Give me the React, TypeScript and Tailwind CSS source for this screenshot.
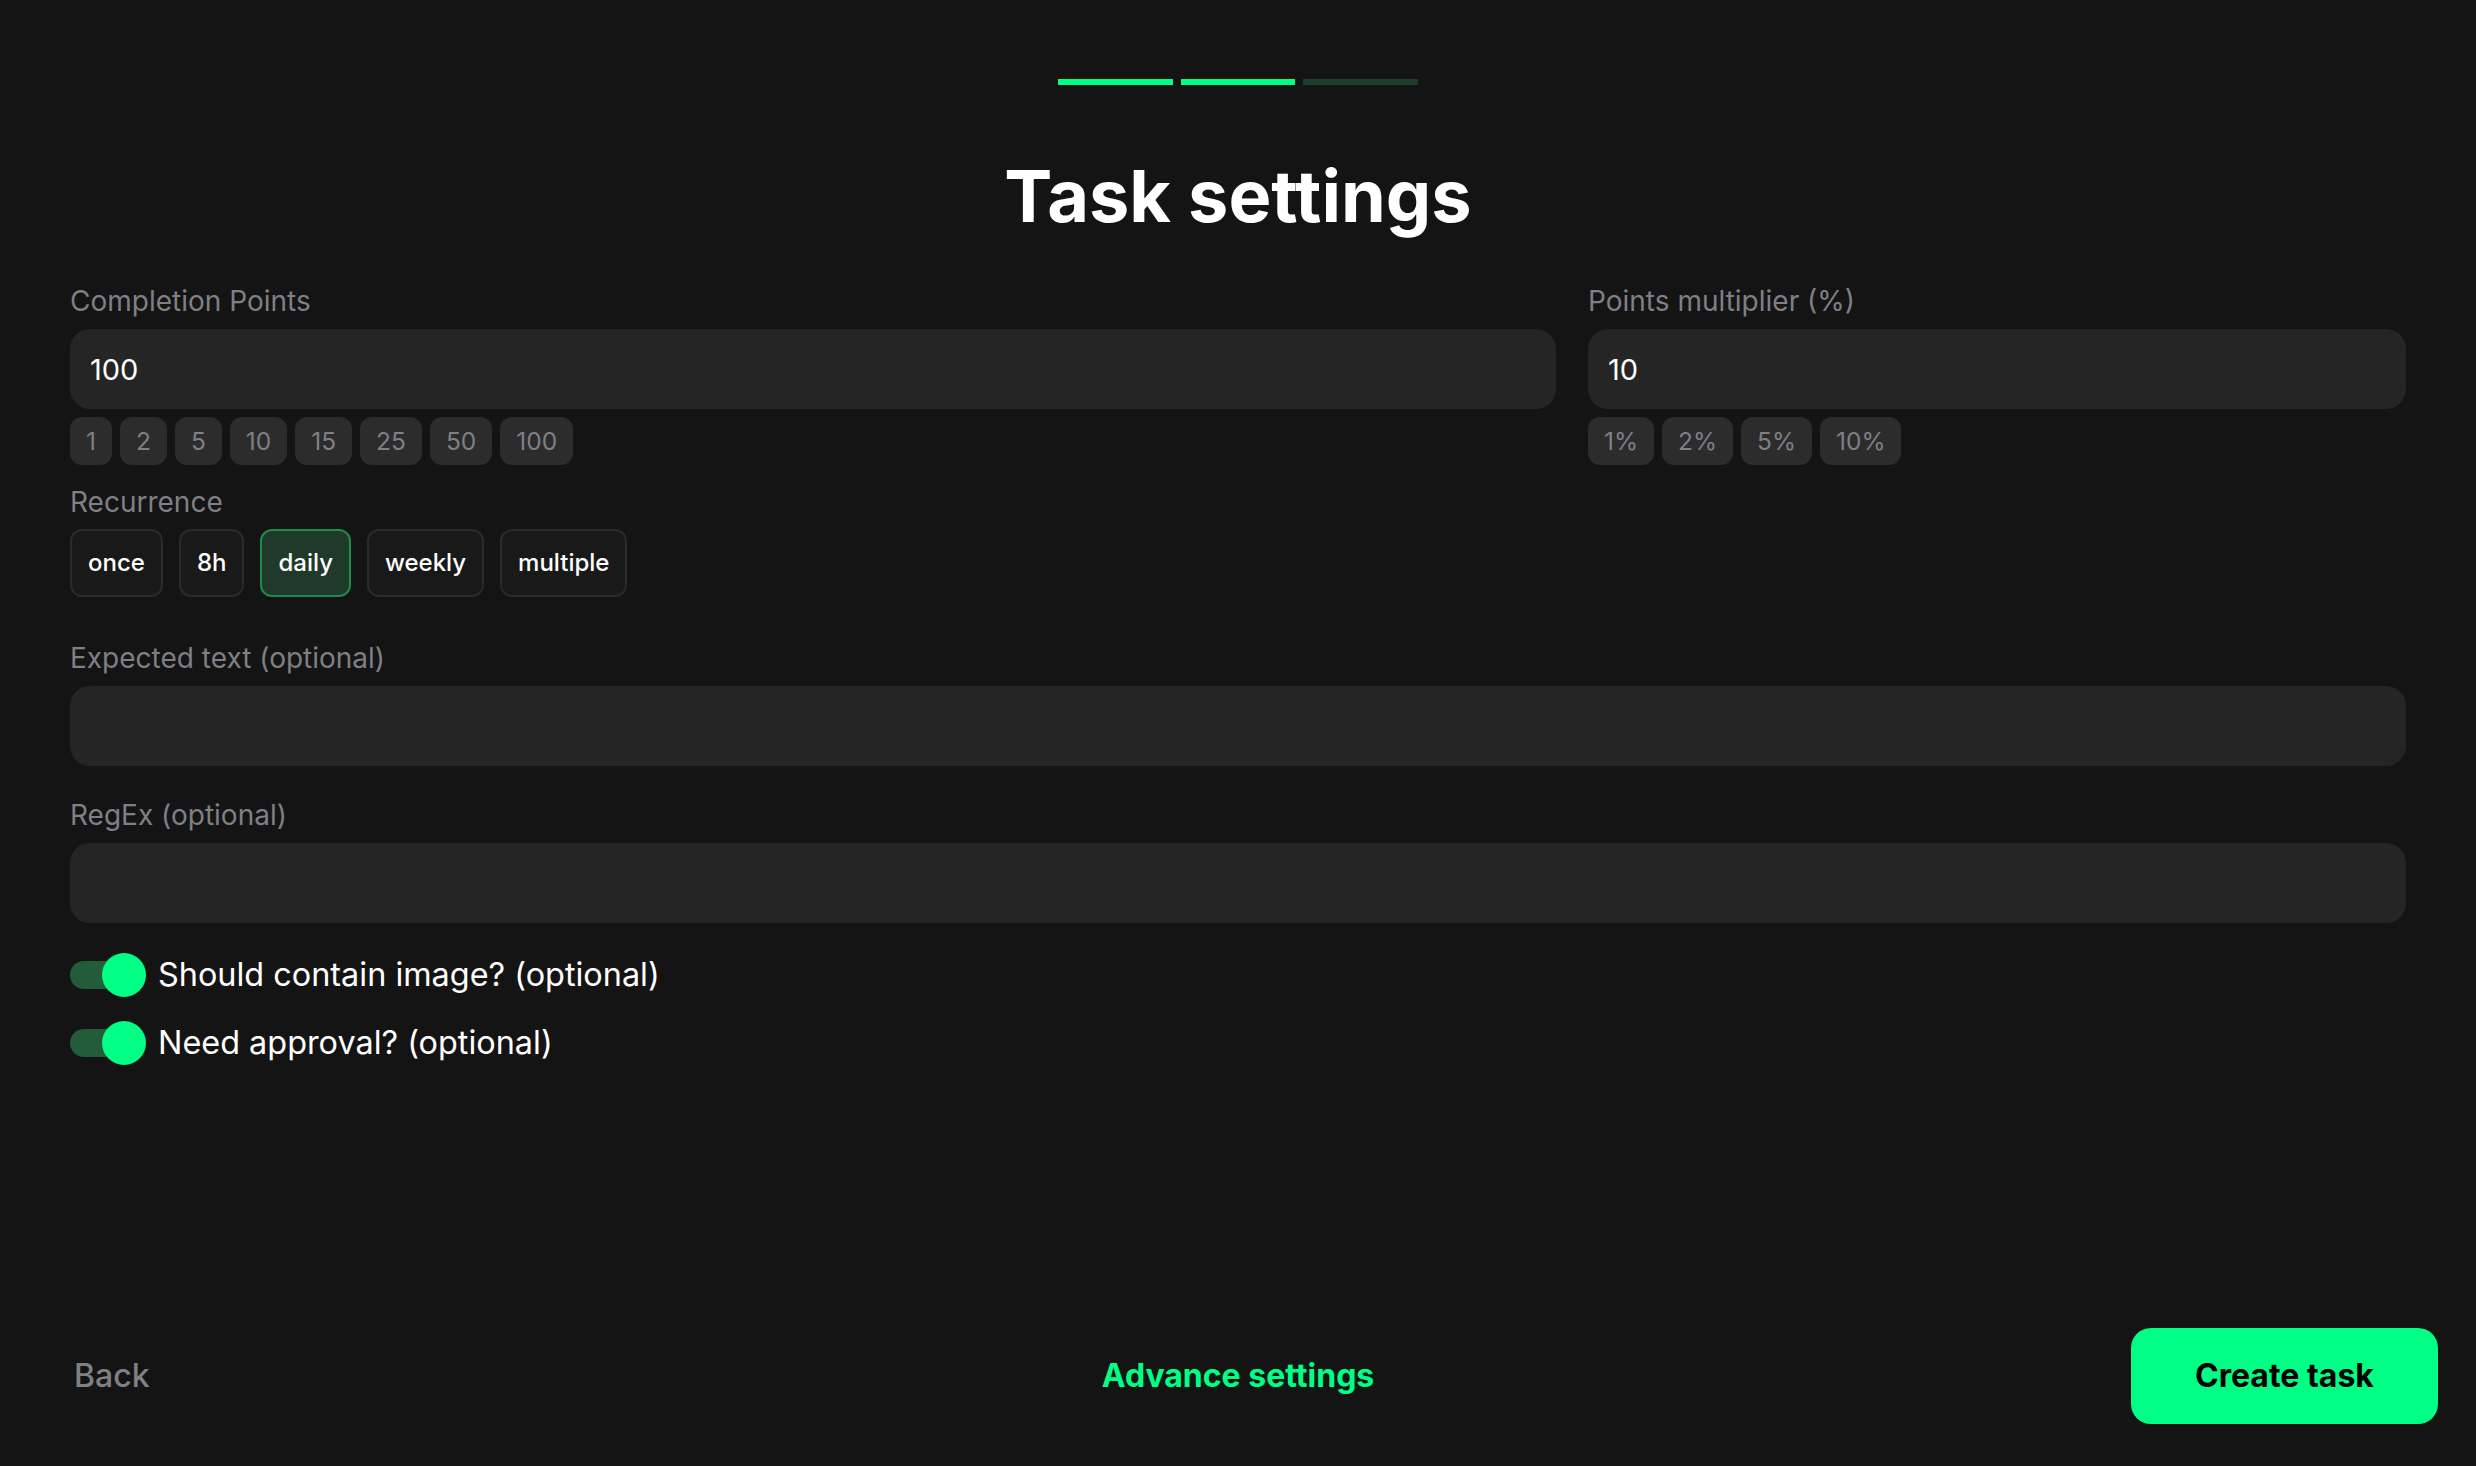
import React from 'react';

const pointChips = ['1', '2', '5', '10', '15', '25', '50', '100'];
const percentChips = ['1%', '2%', '5%', '10%'];
const recurrences = ['once', '8h', 'daily', 'weekly', 'multiple'];

function Label({ children }: { children: React.ReactNode }) {
  return <label className="block h-[34px] mb-[11px] text-[28px] leading-[34px] text-[#7f7f86]">{children}</label>;
}

function Field({ value }: { value?: string }) {
  return (
    <input
      readOnly
      value={value ?? ''}
      className="block w-full h-20 rounded-[20px] bg-[#252525] px-5 text-[29px] text-white outline-none"
    />
  );
}

function Chips({ items }: { items: string[] }) {
  return (
    <div className="flex gap-2 mt-2">
      {items.map((item) => (
        <button
          key={item}
          type="button"
          className="h-12 px-4 rounded-xl bg-[#2c2c2c] text-[24.5px] text-[#7f7f86]"
        >
          {item}
        </button>
      ))}
    </div>
  );
}

function Toggle({ label }: { label: string }) {
  return (
    <div className="flex items-center h-11">
      <div className="relative w-[72px] h-7 rounded-full bg-[#225c38]">
        <div className="absolute left-8 -top-2 w-11 h-11 rounded-full bg-[#00ff85]" />
      </div>
      <span className="ml-4 text-[32.4px] text-white">{label}</span>
    </div>
  );
}

export default function App() {
  return (
    <div className="flex flex-col h-[1466px] bg-[#141414] overflow-hidden" style={{ fontFamily: 'Inter, sans-serif' }}>
      <div className="flex justify-center gap-2 mt-[79px]">
        <div className="w-[115px] h-1.5 bg-[#00ff85]" />
        <div className="w-[114px] h-1.5 bg-[#00ff85]" />
        <div className="w-[115px] h-1.5 bg-[#1f3d2b]" />
      </div>

      <h1 className="mt-[71px] text-center text-[72px] leading-[80px] font-bold text-white">Task settings</h1>

      <div className="px-[70px] mt-12 flex-1">
        <div className="grid grid-cols-[1486px_818px] gap-8">
          <div>
            <Label>Completion Points</Label>
            <Field value="100" />
            <Chips items={pointChips} />
          </div>
          <div>
            <Label>Points multiplier (%)</Label>
            <Field value="10" />
            <Chips items={percentChips} />
          </div>
        </div>

        <div className="mt-5">
          <Label>Recurrence</Label>
          <div className="flex gap-4 -mt-px">
            {recurrences.map((item) => (
              <button
                key={item}
                type="button"
                className={
                  item === 'daily'
                    ? 'h-[68px] px-4 rounded-xl border-2 border-[#1f8a4a] bg-[#1f3a2a] text-2xl font-medium text-white'
                    : 'h-[68px] px-4 rounded-xl border-2 border-[#2a2a2a] bg-[#191919] text-2xl font-medium text-white'
                }
              >
                {item}
              </button>
            ))}
          </div>
        </div>

        <div className="mt-[44px]">
          <Label>Expected text (optional)</Label>
          <Field />
        </div>

        <div className="mt-8">
          <Label>RegEx (optional)</Label>
          <Field />
        </div>

        <div className="mt-[30px] flex flex-col gap-6">
          <Toggle label="Should contain image? (optional)" />
          <Toggle label="Need approval? (optional)" />
        </div>
      </div>

      <div className="grid grid-cols-3 items-center px-[38px] pb-[42px]">
        <span className="pl-9 text-[32px] font-medium text-[#7f7f86]">Back</span>
        <span className="text-center text-[32px] font-bold text-[#00ff85]">Advance settings</span>
        <div className="flex justify-end">
          <button type="button" className="w-[307px] h-24 rounded-[20px] bg-[#00ff85] text-[32px] font-bold text-black">
            Create task
          </button>
        </div>
      </div>
    </div>
  );
}
